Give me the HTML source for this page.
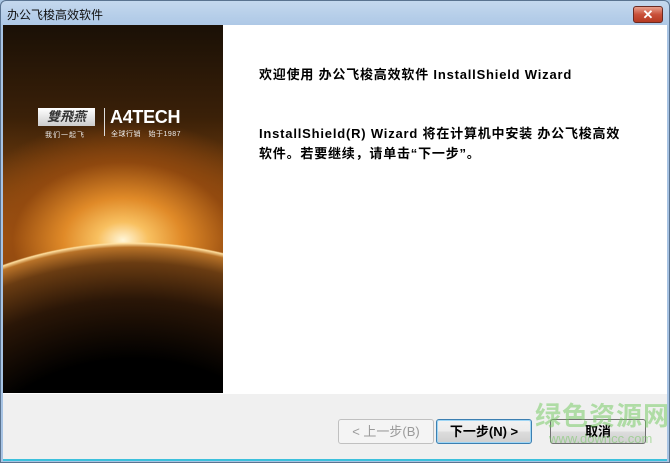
<!DOCTYPE html>
<html><head><meta charset="utf-8"><style>
*{margin:0;padding:0;box-sizing:border-box}
html,body{width:670px;height:463px;overflow:hidden}
body{background:#a9c6e4;font-family:"Liberation Sans","Noto Sans CJK SC",sans-serif;position:relative}
.win{position:absolute;left:0;top:0;width:670px;height:463px;background:linear-gradient(#c4d8ee,#a8c4e4 30px);border:1px solid #5a7390;border-radius:6px 6px 0 0;overflow:hidden}
.title{position:absolute;left:6px;top:5px;font-size:12px;color:#111}
.close{position:absolute;left:632px;top:5px;width:30px;height:17px;border:1px solid #6a2a22;border-radius:3px;background:linear-gradient(#e8a08e,#c9503a 50%,#b53a22);color:#fff;font-size:13px;font-weight:bold;text-align:center;line-height:15px}
.client{position:absolute;left:2px;top:24px;width:664px;height:436px;background:#fff;border-bottom:2px solid #3cc0dc}
.img{position:absolute;left:0;top:0;width:220px;height:368px;overflow:hidden;background:#000}
.sky{position:absolute;left:0;top:0;width:220px;height:368px;background:
 radial-gradient(ellipse 170px 120px at 120px 215px,#fff6d8 0%,#f8c060 15%,#e08a28 35%,rgba(150,75,15,.85) 65%,rgba(40,20,5,0) 100%),
 linear-gradient(#1a1006,#3a2008 25%,#8a4a10 50%,#a85a14 58%,#1a0d03);}
.planet{position:absolute;left:0;top:0;width:220px;height:368px;background:
 radial-gradient(ellipse 320px 260px at 130px 477px,#000 0%,#000 55%,#2a1607 78%,#6a3c12 92%,#b87228 98%,#ffe0a0 99.5%,rgba(0,0,0,0) 100%)}
.logo1{position:absolute;left:35px;top:83px;width:57px;height:18px;background:linear-gradient(#fff,#ccc);color:#333;font-size:13px;font-style:italic;font-weight:bold;text-align:center;line-height:18px}
.logo1s{position:absolute;left:42px;top:105px;color:#eee;font-size:7px;letter-spacing:1px}
.sep{position:absolute;left:101px;top:83px;width:1px;height:28px;background:#ddd}
.logo2{position:absolute;left:107px;top:82px;color:#fff;font-size:18px;font-weight:bold;letter-spacing:-.3px}
.logo2s{position:absolute;left:108px;top:104px;color:#eee;font-size:7px;white-space:nowrap;letter-spacing:.5px}
.txt{position:absolute;font-size:13px;font-weight:bold;color:#000;letter-spacing:.8px;white-space:nowrap}
.bottom{position:absolute;left:0;top:369px;width:664px;height:65px;background:#f0f0f0}
.btn{position:absolute;top:25px;height:25px;width:96px;border:1px solid #707070;border-radius:3px;background:linear-gradient(#f2f2f2,#ebebeb 50%,#dddddd 50%,#cfcfcf);font-size:13px;font-weight:bold;text-align:center;line-height:23px;color:#000}
.dis{color:#9a9a9a;border-color:#c0c0c0;background:#f4f4f4;font-weight:normal}
.def{border-color:#3c7fb1;box-shadow:inset 0 0 0 1px #9fd6f5}
.wm{position:absolute;left:534px;top:400px;color:rgba(110,200,90,.5);font-size:26px;line-height:30px;font-weight:bold;letter-spacing:1px;white-space:nowrap}
.wm2{position:absolute;left:548px;top:430px;color:rgba(110,200,90,.5);font-size:13px;line-height:15px;white-space:nowrap}
</style></head><body>
<div class="win">
<div class="title">办公飞梭高效软件</div>
<div class="close">✕</div>
<div class="client">
 <div class="img"><div class="sky"></div><div class="planet"></div>
  <div class="logo1">雙飛燕</div><div class="logo1s">我们一起飞</div>
  <div class="sep"></div><div class="logo2">A4TECH</div><div class="logo2s">全球行销　始于1987</div></div>
 <div class="txt" style="left:256px;top:39px">欢迎使用 办公飞梭高效软件 InstallShield Wizard</div>
 <div class="txt" style="left:256px;top:99px;line-height:20px">InstallShield(R) Wizard 将在计算机中安装 办公飞梭高效<br>软件。若要继续，请单击“下一步”。</div>
 <div class="bottom">
  <div class="btn dis" style="left:335px">&lt; 上一步(B)</div>
  <div class="btn def" style="left:433px">下一步(N) &gt;</div>
  <div class="btn" style="left:547px">取消</div>
 </div>
</div>
<div class="wm">绿色资源网</div><div class="wm2">www.downcc.com</div>
</div>
</body></html>
